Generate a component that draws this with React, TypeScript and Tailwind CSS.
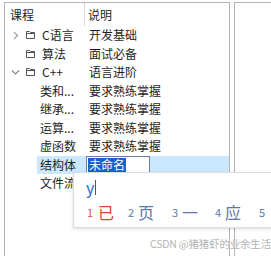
const font = "font-['Noto_Sans_CJK_SC','Noto_Sans',sans-serif]";

function Chevron({ open }: { open?: boolean }) {
  return (
    <svg width="9" height="9" viewBox="0 0 9 9" className="shrink-0">
      {open ? (
        <path d="M1 2.5 L4.5 6 L8 2.5" fill="none" stroke="#8a8a8a" strokeWidth="1.2" />
      ) : (
        <path d="M3 1 L6.5 4.5 L3 8" fill="none" stroke="#a0a0a0" strokeWidth="1.2" />
      )}
    </svg>
  );
}

function Folder() {
  return (
    <svg width="11" height="10" viewBox="0 0 11 10" className="shrink-0">
      <path d="M1.5 1.5 H4.5 L5.5 2.5 H9.5 V8.5 H1.5 Z M1.5 3.5 H9.5" fill="none" stroke="#555" strokeWidth="1" />
    </svg>
  );
}

type Row = { name: string; desc: string; kind: "closed" | "leaf" | "open" | "child" };

const rows: Row[] = [
  { name: "C语言", desc: "开发基础", kind: "closed" },
  { name: "算法", desc: "面试必备", kind: "leaf" },
  { name: "C++", desc: "语言进阶", kind: "open" },
  { name: "类和...", desc: "要求熟练掌握", kind: "child" },
  { name: "继承...", desc: "要求熟练掌握", kind: "child" },
  { name: "运算...", desc: "要求熟练掌握", kind: "child" },
  { name: "虚函数", desc: "要求熟练掌握", kind: "child" },
];

function TreeRow({ row }: { row: Row }) {
  if (row.kind === "child") {
    return (
      <div className="flex h-[18.5px] items-center">
        <div className="w-[80px] pl-[35px] whitespace-nowrap overflow-hidden">{row.name}</div>
        <div className="pl-[4px] whitespace-nowrap">{row.desc}</div>
      </div>
    );
  }
  return (
    <div className="flex h-[18.5px] items-center">
      <div className="w-[80px] flex items-center pl-[6px] whitespace-nowrap">
        <div className="w-[14px]">{row.kind === "closed" ? <Chevron /> : row.kind === "open" ? <Chevron open /> : null}</div>
        <Folder />
        <span className="ml-[6px]">{row.name}</span>
      </div>
      <div className="pl-[4px] whitespace-nowrap">{row.desc}</div>
    </div>
  );
}

export default function App() {
  return (
    <div className={`relative w-[271px] h-[256px] bg-white overflow-hidden text-[12px] text-[#1e1e1e] ${font}`}>
      <div className="flex h-full pt-[2px] pl-[4px]">
        <div className="w-[226px] h-[256px] border-l border-t border-r border-[#b4b4b4] bg-white">
          <div className="flex h-[23px] items-center">
            <div className="w-[80px] h-full flex items-center pl-[5px] border-r border-[#d6d6d6]">课程</div>
            <div className="pl-[3px]">说明</div>
          </div>
          {rows.map((r) => (
            <TreeRow key={r.name} row={r} />
          ))}
          <div className="flex h-[18.5px] items-center">
            <div className="w-[32px]" />
            <div className="flex-1 h-full flex items-center bg-[#cce8ff]">
              <div className="w-[48px] pl-[3px] whitespace-nowrap">结构体</div>
              <div className="ml-[1px] w-[64px] h-full flex items-center bg-white border border-[#6b7f99] pl-[1px]">
                <span className="bg-[#1a62c4] text-white leading-[14px] px-[1px]">未命名</span>
              </div>
            </div>
          </div>
          <div className="flex h-[18.5px] items-center">
            <div className="w-[80px] pl-[35px] whitespace-nowrap overflow-hidden">文件流</div>
          </div>
        </div>
        <div className="w-[4px]" />
        <div className="flex-1 h-[256px] border-l border-t border-[#b4b4b4] bg-white" />
      </div>

      <div className="absolute left-[73px] top-[172px] w-[220px] h-[56px] bg-white border border-[#dcdcdc] shadow-[0_1px_3px_rgba(0,0,0,0.15)]">
        <div className="flex items-center h-[24px] pl-[12px] pt-[4px] text-[16px] text-[#2f6fcf] leading-none">
          <span>y</span>
          <span className="w-px h-[15px] bg-[#555] ml-[1px]" />
        </div>
        <div className="flex items-center h-[30px] pl-[13px] text-[#5a78a8]">
          <div className="w-[41px] flex items-center gap-[5px]">
            <span className="text-[11px] text-[#d8553f]">1</span>
            <span className="text-[16px] text-[#d8442f]">已</span>
          </div>
          <div className="w-[44px] flex items-center gap-[4px]">
            <span className="text-[11px]">2</span>
            <span className="text-[16px]">页</span>
          </div>
          <div className="w-[43px] flex items-center gap-[4px]">
            <span className="text-[11px]">3</span>
            <span className="text-[16px]">一</span>
          </div>
          <div className="w-[44px] flex items-center gap-[4px]">
            <span className="text-[11px]">4</span>
            <span className="text-[16px]">应</span>
          </div>
          <div className="flex items-center">
            <span className="text-[11px]">5</span>
          </div>
        </div>
      </div>

      <div className="absolute left-[150px] top-[236px] text-[10.5px] tracking-[-0.2px] text-[#b4b4b4] whitespace-nowrap [text-shadow:0_0_2px_#fff]">
        CSDN @猪猪虾的业余生活
      </div>
    </div>
  );
}
